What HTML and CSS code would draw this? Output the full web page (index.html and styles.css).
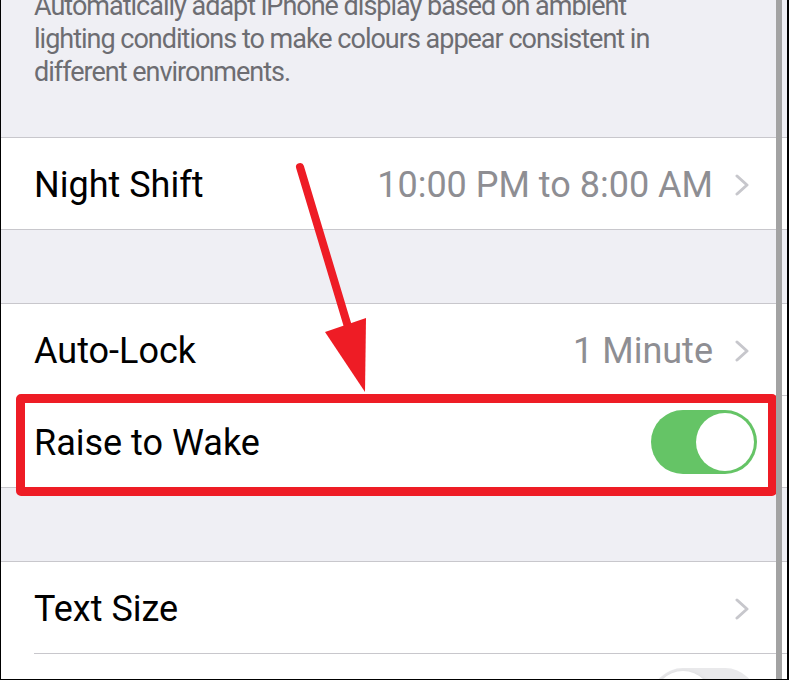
FILE: index.html
```html
<!DOCTYPE html>
<html lang="en">
<head>
  <meta charset="UTF-8">
  <title>Display &amp; Brightness</title>
  <link rel="stylesheet" href="styles.css">
</head>
<body>

<div class="screen">
  <p class="group-note">Automatically adapt iPhone display based on ambient<br>lighting conditions to make colours appear consistent in<br>different environments.</p>

  <div class="group">
    <div class="row">
      <span class="row-title">Night Shift</span>
      <span class="row-value">10:00 PM to 8:00 AM</span>
      <svg class="chevron" viewBox="0 0 16 22"><polyline points="2,2 12,11 2,20"/></svg>
    </div>
  </div>

  <div class="spacer"></div>

  <div class="group">
    <div class="row">
      <span class="row-title">Auto-Lock</span>
      <span class="row-value">1 Minute</span>
      <svg class="chevron" viewBox="0 0 16 22"><polyline points="2,2 12,11 2,20"/></svg>
    </div>
    <div class="row">
      <span class="row-title">Raise to Wake</span>
      <span class="switch on"><span class="knob"></span></span>
    </div>
  </div>

  <div class="spacer"></div>

  <div class="group">
    <div class="row">
      <span class="row-title">Text Size</span>
      <svg class="chevron" viewBox="0 0 16 22"><polyline points="2,2 12,11 2,20"/></svg>
    </div>
    <div class="row">
      <span class="row-title"></span>
      <span class="switch"><span class="knob"></span></span>
    </div>
  </div>

  <!-- annotation layer -->
  <div class="highlight"></div>
  <svg class="arrow" width="789" height="680" viewBox="0 0 789 680">
    <line x1="300" y1="167" x2="352" y2="340" />
    <polygon points="325,332 366,318 365,392" />
  </svg>
  <div class="scrollbar"></div>
</div>

</body>
</html>
```

FILE: styles.css
```css
html, body {
  margin: 0;
  padding: 0;
}
body {
  font-family: Roboto, "Liberation Sans", sans-serif;
  background: #efeff4;
}
.screen {
  position: relative;
  width: 789px;
  height: 680px;
  overflow: hidden;
  box-sizing: border-box;
  background: #efeff4;
  border-left: 1px solid #000;
  border-right: 2px solid #000;
  border-bottom: 1px solid #000;
}
.group-note {
  margin: -10px 0 0;
  padding: 0 20px 0 33px;
  height: 147px;
  white-space: nowrap;
  font-size: 27px;
  line-height: 33px;
  letter-spacing: -1px;
  color: #6d6d72;
}
.group {
  background: #fff;
  border-top: 1px solid #c8c7cc;
  border-bottom: 1px solid #c8c7cc;
}
.spacer {
  height: 73px;
}
.row {
  display: flex;
  align-items: center;
  height: 91px;
  padding: 3px 34px 0 33px;
  box-sizing: border-box;
  position: relative;
}
.row + .row {
  border-top: 1px solid #c8c7cc;
  margin-left: 33px;
  padding-left: 0;
  height: 92px;
}
.row-title {
  flex: 1;
  font-size: 36px;
  color: #000;
}
.row-value {
  font-size: 36px;
  color: #8e8e93;
  margin-right: 22px;
}
.chevron {
  width: 16px;
  height: 22px;
  fill: none;
  stroke: #c7c7cc;
  stroke-width: 3;
  stroke-linecap: round;
  stroke-linejoin: round;
  margin-right: 2px;
}
.switch {
  width: 106px;
  height: 64px;
  border-radius: 32px;
  background: #e9e9eb;
  position: relative;
  margin-right: -4px;
  margin-top: -3px;
}
.switch .knob {
  position: absolute;
  top: 3px;
  left: 3px;
  width: 58px;
  height: 58px;
  border-radius: 50%;
  background: #fff;
  box-shadow: 0 3px 6px rgba(0,0,0,0.18);
}
.switch.on {
  background: #65c466;
}
.switch.on .knob {
  left: auto;
  right: 3px;
  box-shadow: none;
}
.highlight {
  position: absolute;
  left: 15px;
  top: 394px;
  width: 761px;
  height: 102px;
  box-sizing: border-box;
  border: 9px solid #ee1c25;
  border-radius: 5px;
}
.arrow {
  position: absolute;
  left: -1px;
  top: 0;
}
.arrow line {
  stroke: #ee1c25;
  stroke-width: 8;
  stroke-linecap: round;
}
.arrow polygon {
  fill: #ee1c25;
}
.scrollbar {
  position: absolute;
  top: 0;
  bottom: 0;
  left: 775px;
  width: 6px;
  background: #a3a3a3;
}
```
